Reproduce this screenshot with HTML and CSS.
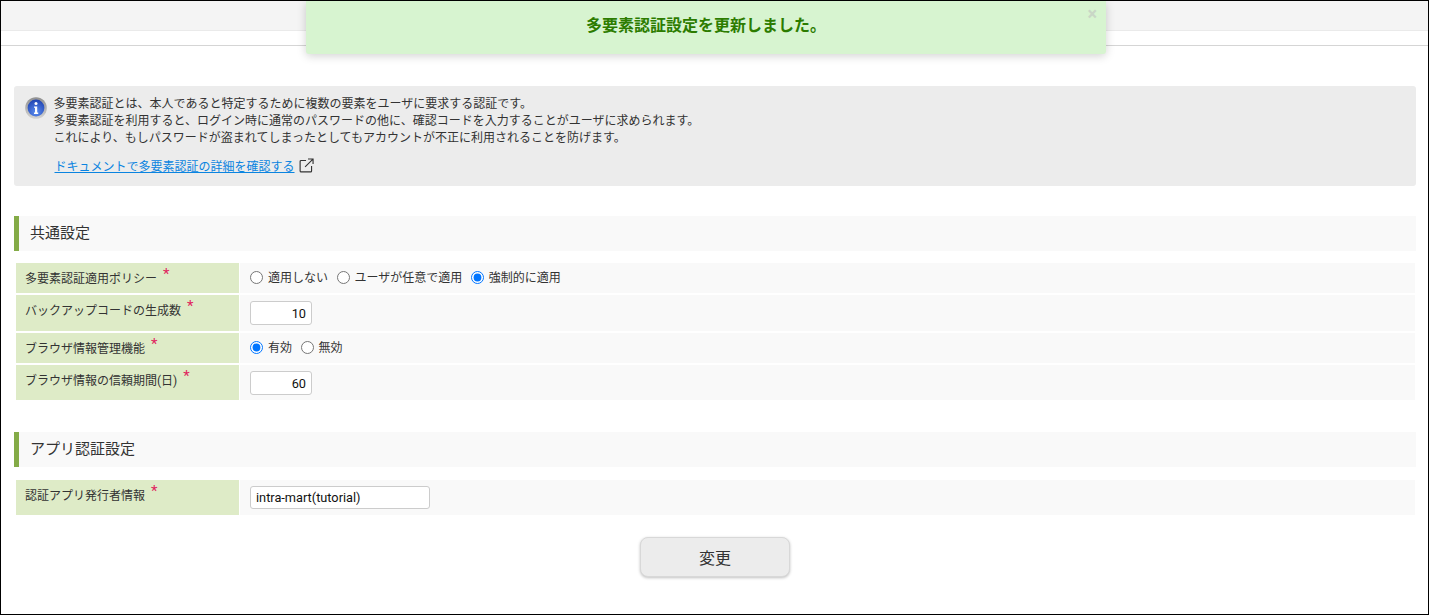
FILE: index.html
```html
<!DOCTYPE html>
<html lang="ja">
<head>
  <meta charset="UTF-8" />
  <title>多要素認証設定</title>
  <link rel="stylesheet" href="styles.css">
</head>
<body>
  <div class="window">
    <div class="topbar"></div>
    <div class="subbar"></div>

    <div class="toast">
      <span class="toast-text">多要素認証設定を更新しました。</span>
      <span class="toast-close">×</span>
    </div>

    <div class="content">
      <div class="info">
        <svg class="info-icon" width="22" height="22" viewBox="0 0 22 22">
          <defs>
            <linearGradient id="ring" x1="0" y1="0" x2="0" y2="1">
              <stop offset="0" stop-color="#8f8f8f" />
              <stop offset="1" stop-color="#d4d4d4" />
            </linearGradient>
            <radialGradient id="ball" cx="0.5" cy="0.75" r="0.8">
              <stop offset="0" stop-color="#5c8df0" />
              <stop offset="1" stop-color="#1c3fae" />
            </radialGradient>
          </defs>
          <circle cx="11" cy="11" r="10.8" fill="url(#ring)" />
          <circle cx="11" cy="11" r="8.4" fill="url(#ball)" />
          <circle cx="11" cy="6.6" r="1.5" fill="#fff" />
          <path d="M9 9.4h3.2v6.2h1v1.3H9v-1.3h1v-4.9H9z" fill="#fff" />
        </svg>
        <div class="info-body">
          <p>多要素認証とは、本人であると特定するために複数の要素をユーザに要求する認証です。</p>
          <p>多要素認証を利用すると、ログイン時に通常のパスワードの他に、確認コードを入力することがユーザに求められます。</p>
          <p>これにより、もしパスワードが盗まれてしまったとしてもアカウントが不正に利用されることを防げます。</p>
          <div class="info-link">
            <a href="#">ドキュメントで多要素認証の詳細を確認する</a>
            <svg width="15" height="15" viewBox="0 0 16 16" fill="none" stroke="#333" stroke-width="1.2">
              <path d="M7.5 2.6H2.2a1 1 0 0 0-1 1v10.2a1 1 0 0 0 1 1h10.2a1 1 0 0 0 1-1V8.5" />
              <path d="M6.5 9.5 14.6 1.4M9.6 1h5.4v5.4" />
            </svg>
          </div>
        </div>
      </div>

      <h2 class="section-title section-first">共通設定</h2>
      <div class="rows">
        <div class="row row-30">
          <div class="row-label">多要素認証適用ポリシー<span class="req">*</span></div>
          <div class="row-value row-radios">
            <label class="radio"><input type="radio" name="policy">適用しない</label>
            <label class="radio"><input type="radio" name="policy">ユーザが任意で適用</label>
            <label class="radio"><input type="radio" name="policy" checked>強制的に適用</label>
          </div>
        </div>
        <div class="row row-36">
          <div class="row-label">バックアップコードの生成数<span class="req">*</span></div>
          <div class="row-value"><input class="num" type="text" value="10"></div>
        </div>
        <div class="row row-30">
          <div class="row-label">ブラウザ情報管理機能<span class="req">*</span></div>
          <div class="row-value row-radios">
            <label class="radio"><input type="radio" name="browser" checked>有効</label>
            <label class="radio"><input type="radio" name="browser">無効</label>
          </div>
        </div>
        <div class="row row-35">
          <div class="row-label">ブラウザ情報の信頼期間(日)<span class="req">*</span></div>
          <div class="row-value"><input class="num" type="text" value="60"></div>
        </div>
      </div>

      <h2 class="section-title section-second">アプリ認証設定</h2>
      <div class="rows">
        <div class="row row-35">
          <div class="row-label">認証アプリ発行者情報<span class="req">*</span></div>
          <div class="row-value"><input class="txt" type="text" value="intra-mart(tutorial)"></div>
        </div>
      </div>

      <div class="actions">
        <button class="btn" type="button">変更</button>
      </div>
    </div>
  </div>
</body>
</html>
```

FILE: styles.css
```css
* {
  box-sizing: border-box;
}

html, body {
  margin: 0;
  height: 100%;
  overflow: hidden;
}

body {
  font-family: Roboto, 'Noto Sans CJK JP', sans-serif;
  font-size: 12px;
  color: #333;
  background: #fff;
}

.window {
  position: relative;
  height: 615px;
  border: 1px solid #000;
}

.topbar {
  height: 30px;
  background: #f4f4f4;
  border-bottom: 1px solid #eaeaea;
}

.subbar {
  height: 15px;
  border-bottom: 1px solid #d5d5d5;
}

.toast {
  position: absolute;
  top: 0;
  left: 305px;
  width: 800px;
  height: 53px;
  background: #d7f4d0;
  border-radius: 0 0 3px 3px;
  box-shadow: 0 2px 10px rgba(0, 0, 0, 0.18);
  display: flex;
  align-items: center;
  justify-content: center;
}

.toast-text {
  font-size: 16px;
  font-weight: 700;
  line-height: 20px;
  color: #2c7c00;
  margin-bottom: 3px;
}

.toast-close {
  position: absolute;
  top: 4px;
  right: 9px;
  font-size: 18px;
  font-weight: 700;
  line-height: 18px;
  color: #c9d6c6;
}

.content {
  padding: 40px 12px 0 13px;
}

.info {
  display: flex;
  height: 100px;
  padding: 11px 11px 0 11px;
  background: #ececec;
  border-radius: 3px;
}

.info-icon {
  flex: none;
  margin-right: 6.5px;
}

.info-body {
  margin-top: -1px;
}

.info-body p {
  margin: 0;
  line-height: 17px;
}

.info-link {
  display: flex;
  align-items: center;
  gap: 4px;
  margin: 11px 0 0 1px;
  height: 15px;
}

.info-link a {
  color: #0a84e0;
  text-decoration: underline;
}

.section-title {
  margin: 0;
  height: 35px;
  padding-left: 11px;
  font-size: 15px;
  font-weight: 400;
  line-height: 35px;
  background: #f9f9f9;
  border-left: 5px solid #84ab47;
}

.section-first {
  margin-top: 30px;
}

.section-second {
  margin-top: 32px;
}

.rows {
  display: flex;
  flex-direction: column;
  gap: 2px;
  margin: 12px 1px 0 2px;
}

.section-second + .rows {
  margin-top: 13px;
}

.row {
  display: flex;
}

.row-30 {
  height: 30px;
}

.row-36 {
  height: 36px;
}

.row-35 {
  height: 35px;
}

.row-label {
  flex: none;
  width: 223px;
  padding: 5px 0 0 9px;
  line-height: 15px;
  background: #deebc7;
}

.req {
  color: #e0245e;
  font-size: 15px;
  line-height: 12px;
  margin-left: 6px;
  vertical-align: 4px;
}

.row-value {
  flex: 1;
  margin-left: 1px;
  padding-left: 10px;
  display: flex;
  align-items: center;
  background: #f9f9f9;
}

.row-radios {
  padding-bottom: 3px;
}

.radio {
  display: flex;
  align-items: center;
  margin-right: 8.5px;
}

.radio input {
  width: 13px;
  height: 13px;
  margin: 2px 5px 0 0;
}

.num, .txt {
  font-family: Roboto, 'Noto Sans CJK JP', sans-serif;
  font-size: 12.75px;
  color: #111;
  background: #fff;
  border: 1px solid #ccc;
  border-radius: 3px;
  outline: none;
}

.num {
  width: 62px;
  height: 24px;
  padding: 1px 5px 0;
  text-align: right;
}

.txt {
  width: 180px;
  height: 23px;
  padding: 0 5px;
}

.actions {
  display: flex;
  justify-content: center;
  margin-top: 22px;
}

.btn {
  width: 150px;
  height: 40px;
  font-family: Roboto, 'Noto Sans CJK JP', sans-serif;
  font-size: 16px;
  color: #333;
  background: #ececec;
  border: 1px solid #d8d8d8;
  border-radius: 8px;
  box-shadow: 0 1px 3px rgba(0, 0, 0, 0.25);
}
```
